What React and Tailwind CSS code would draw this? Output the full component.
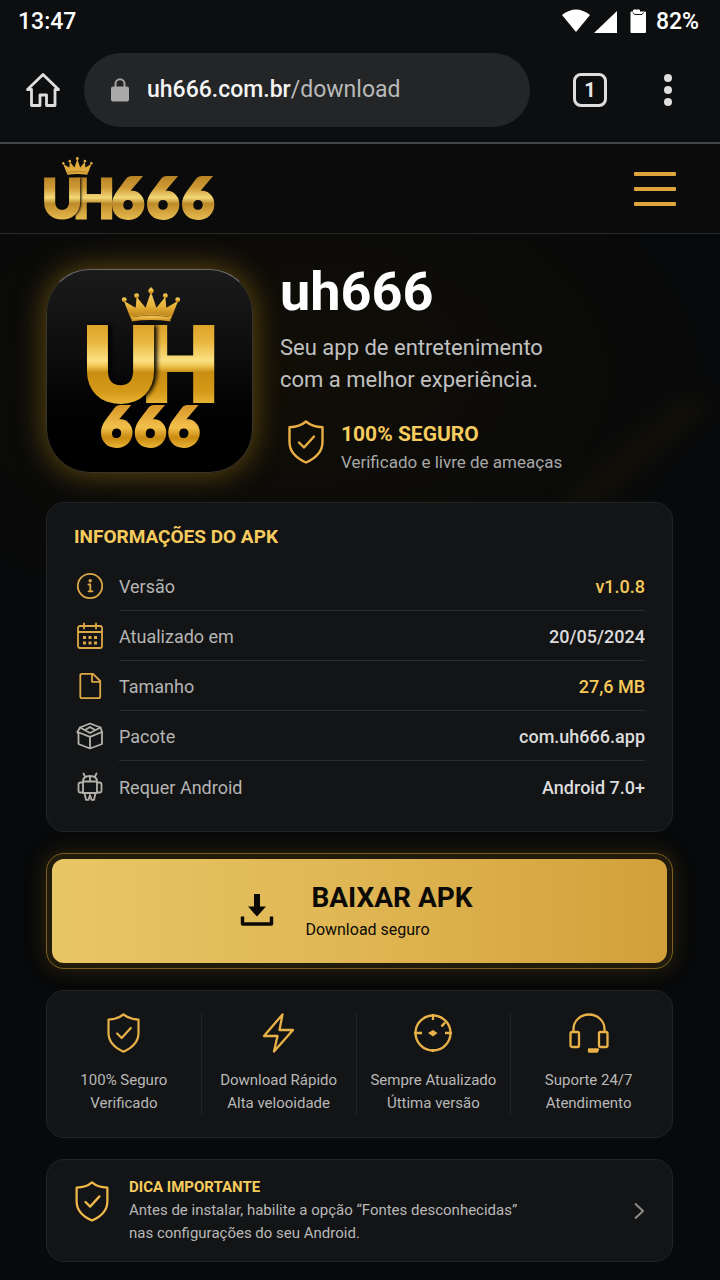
import React from "react";

function Crown({ fill }) {
  return (
    <g fill={fill}>
      <path d="M9 31 L2 13 L14 20 L15 9 L24 20 L29.500 4 L35 20 L44 9 L45 20 L57 13 L50 31 Q29.500 25 9 31Z" />
      <path d="M9.500 29 Q29.500 25 49.500 29 L49 34 Q29.500 31 10 34Z" />
      <circle cx="2.500" cy="12" r="2.500" />
      <circle cx="15" cy="8" r="2.500" />
      <circle cx="44" cy="8" r="2.500" />
      <circle cx="56.500" cy="12" r="2.500" />
      <path d="M29.500 -1 L32 3 L29.500 8 L27 3Z" />
      <circle cx="29.500" cy="3" r="2.600" />
      <path d="M11 29.500 Q29.500 26 48 29.500" fill="none" stroke="#8a5a0a" strokeWidth="0.800" />
    </g>
  );
}

function HeaderLogo() {
  return (
    <svg viewBox="-4 -8 184 86" className="h-[86px] w-[184px]" role="img" aria-label="UH666">
      <defs>
        <linearGradient id="hl" gradientUnits="userSpaceOnUse" x1="0" y1="23" x2="0" y2="66">
          <stop offset="0" stopColor="#b98426" />
          <stop offset="0.25" stopColor="#cf9a35" />
          <stop offset="0.48" stopColor="#f3d877" />
          <stop offset="0.62" stopColor="#bd8a28" />
          <stop offset="0.8" stopColor="#d3a23c" />
          <stop offset="1" stopColor="#e6bb50" />
        </linearGradient>
      </defs>
      <g transform="translate(18 3) scale(0.52)">
        <Crown fill="#dda83c" />
      </g>
      <g fontFamily="Lato, sans-serif" fontWeight="900" fontSize="54" fill="url(#hl)" stroke="url(#hl)" strokeWidth="3">
        <text x="29" y="64">H</text>
        <text x="-2" y="64" className="drop-shadow-[1px_0_1px_#000]">U</text>
        <text x="68 103 138" y="64" fontSize="55" strokeWidth="4">666</text>
      </g>
    </svg>
  );
}

function AppLogo() {
  return (
    <svg viewBox="0 0 204 204" className="h-full w-full" role="img" aria-label="UH 666">
      <defs>
        <linearGradient id="big" gradientUnits="userSpaceOnUse" x1="0" y1="56" x2="0" y2="135">
          <stop offset="0" stopColor="#dda32b" />
          <stop offset="0.2" stopColor="#e9b53c" />
          <stop offset="0.45" stopColor="#fbe183" />
          <stop offset="0.52" stopColor="#f0c450" />
          <stop offset="0.6" stopColor="#c98d12" />
          <stop offset="0.85" stopColor="#d59a18" />
          <stop offset="1" stopColor="#e8b437" />
        </linearGradient>
        <linearGradient id="small" gradientUnits="userSpaceOnUse" x1="0" y1="138" x2="0" y2="180">
          <stop offset="0" stopColor="#d9992a" />
          <stop offset="0.5" stopColor="#f2c04a" />
          <stop offset="0.75" stopColor="#c98a10" />
          <stop offset="1" stopColor="#eab63a" />
        </linearGradient>
        <linearGradient id="crown" x1="0" y1="0" x2="0" y2="1">
          <stop offset="0" stopColor="#f3cf6a" />
          <stop offset="0.5" stopColor="#e9b53c" />
          <stop offset="1" stopColor="#b97c14" />
        </linearGradient>
      </defs>
      <g transform="translate(74 18)">
        <Crown fill="url(#crown)" />
      </g>
      <g fontFamily="Lato, sans-serif" fontWeight="900" fontSize="101" fill="url(#big)" stroke="url(#big)" strokeWidth="6">
        <text x="94" y="131">H</text>
        <text x="35" y="131" className="drop-shadow-[3px_0_2px_#000]">U</text>
      </g>
      <text x="53 87 121" y="178" fontFamily="Lato, sans-serif" fontWeight="900" fontSize="54" fill="url(#small)" stroke="url(#small)" strokeWidth="4">666</text>
    </svg>
  );
}

function Shield({ className }) {
  return (
    <svg viewBox="0 0 36 44" className={className} fill="none" stroke="currentColor" strokeWidth="2.400" strokeLinejoin="round" strokeLinecap="round" aria-hidden="true">
      <path d="M18 1.500 C14 5 8 7 1.500 7.200 V22 C1.500 32 9 38.500 18 42.500 C27 38.500 34.500 32 34.500 22 V7.200 C28 7 22 5 18 1.500Z" />
      <path d="M11 22.500 L16 27.500 L26 16.500" />
    </svg>
  );
}

function RowIcon({ name }) {
  const icons = {
    info: (
      <>
        <circle cx="14" cy="14" r="12.200" />
        <path d="M12.500 12.500 H14.300 V19.300 M12.500 19.300 H16.500" />
        <circle cx="14.200" cy="8.700" r="0.800" fill="currentColor" />
      </>
    ),
    calendar: (
      <>
        <rect x="2" y="4" width="24" height="22" rx="2" />
        <path d="M2 10 H26 M8 1.500 V6.500 M20 1.500 V6.500" />
        <path d="M7 15.500 H10 M12.500 15.500 H15.500 M18 15.500 H21 M7 21 H10 M12.500 21 H15.500 M18 21 H21" strokeWidth="3" strokeLinecap="butt" />
      </>
    ),
    file: (
      <>
        <path d="M6 1.800 H17 L24.200 9 V24.500 Q24.200 26.200 22.500 26.200 H6 Q4.300 26.200 4.300 24.500 V3.500 Q4.300 1.800 6 1.800Z" />
        <path d="M16 2 V9.800 H24" />
      </>
    ),
    box: (
      <>
        <path d="M14 1.500 L24.500 5.500 L26 10 V22 L14 26.500 L2.500 22 V12 L1.500 10 L4 5.500Z" />
        <path d="M1.500 10 L14 14.800 L26 10 M14 14.800 V26 M4 5.500 L14 11 L24.500 5.500 M9 8 L14 5 L19 8" />
      </>
    ),
    android: (
      <>
        <path d="M7 9.500 Q7 4 14 4 Q21 4 21 9.500 V21 H7Z M7 9.500 H21 M14 4 V9.500" />
        <path d="M9 4.500 L7.500 1.500 M19 4.500 L20.500 1.500" />
        <path d="M7 10.500 H4.500 Q2.500 10.500 2.500 12.500 V19 Q2.500 20.500 4 20.500 H7 M21 10.500 H23.500 Q25.500 10.500 25.500 12.500 V19 Q25.500 20.500 24 20.500 H21" />
        <path d="M8.500 21 L10 27.800 H12.500 L14 23 L15.500 27.800 H18 L19.500 21" />
      </>
    ),
  };
  return (
    <svg viewBox="0 0 28 29" className="h-[29px] w-7" fill="none" stroke="currentColor" strokeWidth="1.800" strokeLinecap="round" strokeLinejoin="round" aria-hidden="true">
      {icons[name]}
    </svg>
  );
}

const rows = [
  { icon: "info", label: "Versão", value: "v1.0.8", gold: true, goldIcon: true },
  { icon: "calendar", label: "Atualizado em", value: "20/05/2024", goldIcon: true },
  { icon: "file", label: "Tamanho", value: "27,6 MB", gold: true, goldIcon: true },
  { icon: "box", label: "Pacote", value: "com.uh666.app" },
  { icon: "android", label: "Requer Android", value: "Android 7.0+" },
];

function FeatureIcon({ name }) {
  if (name === "shield") return <Shield className="h-10 w-[33px]" />;
  const icons = {
    bolt: <path d="M23.500 1.500 L5 23 H18.500 L15 38.500 L34 17 H20.500Z" />,
    target: (
      <>
        <circle cx="20" cy="20" r="17.500" />
        <path d="M20 1 V7 M20 36 V39 M1 20 H9 M32 20 H39" />
        <path d="M28.500 13.500 L32 9.500" strokeWidth="2.600" />
        <path d="M15 20 L20 17 L24.500 20 L20 23.500Z" fill="currentColor" stroke="none" />
      </>
    ),
    headset: (
      <>
        <path d="M4.500 19 V16 A15.500 14.500 0 0 1 35.500 16 V19" />
        <rect x="1.500" y="19" width="8.500" height="15" rx="1.500" />
        <rect x="30" y="19" width="8.500" height="15" rx="1.500" />
        <path d="M20 36.500 H29 L28 38.500 H20Z" />
      </>
    ),
  };
  return (
    <svg viewBox="0 0 40 40" className="size-10" fill="none" stroke="currentColor" strokeWidth="2.300" strokeLinejoin="round" aria-hidden="true">
      {icons[name]}
    </svg>
  );
}

const features = [
  { icon: "shield", title: "100% Seguro", text: "Verificado" },
  { icon: "bolt", title: "Download Rápido", text: "Alta velooidade" },
  { icon: "target", title: "Sempre Atualizado", text: "Úttima versão" },
  { icon: "headset", title: "Suporte 24/7", text: "Atendimento" },
];

function StatusBar() {
  return (
    <div className="flex h-11 items-center justify-between pr-[21px] pl-[18px] text-[23px] font-medium text-white">
      <span>13:47</span>
      <div className="flex items-center">
        <svg viewBox="0 0 84 26" className="mr-[10px] h-[26px] w-[84px]" fill="#fff" aria-hidden="true">
          <path d="M0 6 Q14 -5 28 6 L14 23Z" />
          <path d="M55 2 V24 H32Z" />
          <path d="M71 2.500 V1.500 Q71 0.500 72 0.500 H77 Q78 0.500 78 1.500 V2.500 H83 Q84 2.500 84 3.500 V23 Q84 24 83 24 H69.500 Q68.500 24 68.500 23 V3.500 Q68.500 2.500 69.500 2.500Z" />
          <path d="M71 3.500 L72.500 5.500 H80 L81.500 3.500" fill="none" stroke="#111" strokeWidth="1" />
        </svg>
        <span>82%</span>
      </div>
    </div>
  );
}

function BrowserBar() {
  return (
    <div className="flex items-center border-b-2 border-[#454647] pt-[9px] pr-[47px] pb-[15px] pl-[26px]">
      <button type="button" aria-label="Página inicial" className="mr-6 text-[#dedede]">
        <svg viewBox="0 0 34 34" className="size-[34px]" fill="none" stroke="currentColor" strokeWidth="2.800" strokeLinejoin="round" strokeLinecap="round" aria-hidden="true">
          <path d="M17 1.500 L32.500 16.500 H29 V32.500 H20.500 V22 H14 V32.500 H5.500 V16.500 H1.500Z" />
        </svg>
      </button>
      <button type="button" aria-label="Endereço" className="flex h-[74px] min-w-0 flex-1 items-center rounded-full bg-[#242526] pl-[27px] text-[23px]">
        <svg viewBox="0 0 18 24" className="mr-[18px] h-6 w-[18px]" aria-hidden="true">
          <path d="M4.500 9 V6 A4.500 4.700 0 0 1 13.500 6 V9" fill="none" stroke="#a5a5a5" strokeWidth="2" />
          <rect x="0" y="8.500" width="18" height="15" rx="2" fill="#a9a9a9" />
        </svg>
        <span className="font-medium text-[#f4f4f4]">uh666.com.br</span>
        <span className="text-[#b9b9ba]">/download</span>
      </button>
      <button type="button" aria-label="Guias abertas" className="mr-14 ml-[43px] flex size-[34px] items-center justify-center rounded-[8px] border-3 border-[#dedede] text-[20px] leading-none font-bold text-[#e8e8e8]">
        1
      </button>
      <button type="button" aria-label="Mais opções" className="flex w-[10px] flex-col items-center gap-1">
        <span className="size-2 rounded-full bg-[#dedede]" />
        <span className="size-2 rounded-full bg-[#dedede]" />
        <span className="size-2 rounded-full bg-[#dedede]" />
      </button>
    </div>
  );
}

const card = "rounded-[18px] border border-[#232425] bg-[#131415]";

export default function App() {
  return (
    <div className="min-h-screen bg-[#08090a] font-['Roboto',sans-serif]">
      <div className="bg-[#0d0e0f]">
        <StatusBar />
        <BrowserBar />
      </div>

      <header className="flex h-[90px] items-center justify-between border-b border-[#27282a] bg-[#0b0b0c] pr-11 pl-10">
        <a href="#inicio">
          <HeaderLogo />
        </a>
        <button type="button" aria-label="Menu" className="flex w-[42px] flex-col gap-[11px]">
          <span className="h-1 rounded-[1px] bg-[#dda43c]" />
          <span className="h-1 rounded-[1px] bg-[#dda43c]" />
          <span className="h-1 rounded-[1px] bg-[#dda43c]" />
        </button>
      </header>

      <main className="relative isolate flex flex-col gap-[21px] overflow-hidden bg-[radial-gradient(ellipse_420px_260px_at_40%_140px,#110e06_0%,transparent_100%)] pt-[35px] pr-[47px] pb-[19px] pl-[46px]">
        <div className="absolute top-[215px] right-0 -z-10 h-3 w-[170px] -rotate-40 bg-[#1c1607] blur-md" />
        <section className="mb-[5px] flex items-start gap-[27px]">
          <div className="h-[204px] w-[207px] shrink-0 rounded-[44px] border border-[#3a3526] border-t-[#6b6b6b] bg-linear-to-b from-[#1b1b1c] via-[#0a0a0a] to-black shadow-[0_0_28px_2px_#5c4610]">
            <AppLogo />
          </div>
          <div className="min-w-0 flex-1">
            <h1 className="text-[54px] leading-[46px] font-bold text-white">uh666</h1>
            <p className="mt-[17px] text-[22px] leading-8 text-[#c0c0c0]">
              Seu app de entretenimento
              <br />
              com a melhor experiência.
            </p>
            <div className="mt-6 flex items-start gap-[17px] pl-2">
              <Shield className="h-11 w-9 text-[#e9ae45]" />
              <div className="leading-7">
                <p className="text-[21px] font-bold text-[#f6cc5e]">100% SEGURO</p>
                <p className="text-[17px] text-[#a8a8a8]">Verificado e livre de ameaças</p>
              </div>
            </div>
          </div>
        </section>

        <section className={`${card} px-[27px] pt-[22px] pb-5`}>
          <h2 className="mb-3 text-[19px] leading-6 font-bold text-[#f6cc5e]">INFORMAÇÕES DO APK</h2>
          <table className="w-full border-separate border-spacing-0 text-[18px]">
            <tbody>
              {rows.map((row, i) => {
                const line = i < rows.length - 1 ? "border-b border-[#2a2b2c]" : "";
                return (
                  <tr key={row.label} className="h-[50px]">
                    <td className={`w-[45px] p-0 pl-[2px] ${row.goldIcon ? "text-[#dca846]" : "text-[#b5b2ac]"}`}>
                      <RowIcon name={row.icon} />
                    </td>
                    <th scope="row" className={`p-0 pt-[2px] text-left font-normal text-[#b4b4b4] ${line}`}>
                      {row.label}
                    </th>
                    <td className={`p-0 pt-[2px] text-right font-medium ${line} ${row.gold ? "text-[#f6c95a]" : "text-[#dcdcdc]"}`}>
                      {row.value}
                    </td>
                  </tr>
                );
              })}
            </tbody>
          </table>
        </section>

        <button
          type="button"
          className="rounded-[18px] border border-[#7d6020] bg-[#211b0c] p-[5px] text-[#0c0a06] shadow-[0_0_18px_1px_#2e240c]"
        >
          <span className="flex h-[104px] items-center justify-center gap-[31px] rounded-[12px] bg-linear-to-r from-[#e9c665] via-[#dfb653] to-[#d2a03a] pr-[6px]">
            <svg viewBox="0 0 34 34" className="size-[34px]" aria-hidden="true">
              <path d="M14 0 H20 V12.500 H26 L17 22.500 L8 12.500 H14Z" fill="#0a0905" />
              <path d="M2.500 22.500 V30 H31.500 V22.500" fill="none" stroke="#0a0905" strokeWidth="3.400" strokeLinejoin="round" />
            </svg>
            <span className="flex flex-col items-start pt-[2px]">
              <span className="pl-[6px] text-[28px] leading-9 font-bold">BAIXAR APK</span>
              <span className="text-[16px] leading-7">Download seguro</span>
            </span>
          </span>
        </button>

        <section className={`${card} grid grid-cols-4 py-[22px] pr-[6px]`}>
          {features.map((f, i) => (
            <div
              key={f.title}
              className={`flex flex-col items-center text-center text-[15px] leading-[23px] text-[#b8b8b8] ${i < 3 ? "border-r border-[#222324]" : ""}`}
            >
              <span className="mb-4 text-[#e9b248]">
                <FeatureIcon name={f.icon} />
              </span>
              <p>{f.title}</p>
              <p>{f.text}</p>
            </div>
          ))}
        </section>

        <a href="#dica" className={`${card} flex items-center px-7 py-4`}>
          <Shield className="mt-[5px] h-[41px] w-[34px] shrink-0 self-start text-[#eeb84a]" />
          <div className="ml-5 flex-1 text-[15px] leading-[23px] text-[#b8b8b8]">
            <h3 className="font-bold text-[#f6cc5e]">DICA IMPORTANTE</h3>
            <p>
              Antes de instalar, habilite a opção “Fontes desconhecidas”
              <br />
              nas configurações do seu Android.
            </p>
          </div>
          <svg viewBox="0 0 10 18" className="h-[18px] w-[10px]" fill="none" stroke="#8d8a84" strokeWidth="2" aria-hidden="true">
            <path d="M1 1.500 L9 9 L1 16.500" />
          </svg>
        </a>
      </main>
    </div>
  );
}
